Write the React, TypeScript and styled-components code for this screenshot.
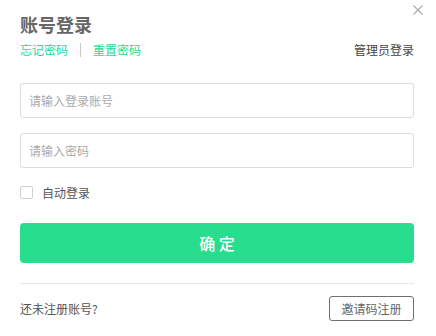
import React from 'react'
import styled, { createGlobalStyle } from 'styled-components'

const GlobalStyle = createGlobalStyle`
  html, body {
    margin: 0;
    padding: 0;
    background: #fff;
  }
  body {
    font-family: 'Noto Sans CJK SC', 'Noto Sans', sans-serif;
  }
  * {
    box-sizing: border-box;
  }
`

const Dialog = styled.div`
  position: relative;
  width: 436px;
  height: 336px;
  padding: 14px 22px 0 20px;
  display: flex;
  flex-direction: column;
`

const Close = styled.button`
  position: absolute;
  top: 3px;
  right: 13px;
  width: 10px;
  height: 10px;
  padding: 0;
  border: none;
  background: none;
  cursor: pointer;
`

const Title = styled.h2`
  margin: 0;
  font-size: 18px;
  line-height: 20px;
  font-weight: 700;
  color: #666;
`

const LinkRow = styled.div`
  display: flex;
  align-items: center;
  margin-top: 9px;
  height: 14px;
  font-size: 12px;
  line-height: 14px;
`

const GreenLink = styled.a`
  color: #2bd793;
  text-decoration: none;
  cursor: pointer;
`

const Sep = styled.span`
  width: 1px;
  height: 14px;
  background: #c8c8c8;
  margin: 0 12px;
`

const AdminLink = styled.a`
  margin-left: auto;
  color: #444;
  cursor: pointer;
`

const Input = styled.input<{ $top: number }>`
  display: block;
  width: 100%;
  height: 35px;
  margin-top: ${p => p.$top}px;
  padding: 0 8px;
  border: 1px solid #dcdcdc;
  border-radius: 3px;
  font-family: inherit;
  font-size: 12px;
  color: #333;
  outline: none;
  &::placeholder {
    color: #aaa;
  }
`

const CheckRow = styled.label`
  display: flex;
  align-items: center;
  margin-top: 18px;
  height: 13px;
  font-size: 12px;
  color: #555;
  cursor: pointer;
`

const Box = styled.span`
  width: 13px;
  height: 13px;
  border: 1px solid #d0d0d0;
  border-radius: 2px;
  margin-right: 9px;
`

const Submit = styled.button`
  margin-top: 24px;
  width: 100%;
  height: 40px;
  border: none;
  border-radius: 4px;
  background: #28dd8e;
  color: #fff;
  font-family: inherit;
  font-size: 16px;
  font-weight: 500;
  cursor: pointer;
`

const Divider = styled.div`
  margin-top: 20px;
  height: 1px;
  background: #e8e8e8;
`

const Footer = styled.div`
  display: flex;
  align-items: center;
  justify-content: space-between;
  margin-top: 12px;
  font-size: 12px;
  color: #555;
`

const OutlineButton = styled.button`
  width: 85px;
  height: 25px;
  padding: 0;
  border: 1px solid #707070;
  border-radius: 3px;
  background: #fff;
  color: #666;
  font-family: inherit;
  font-size: 12px;
  cursor: pointer;
`

export default function App() {
  return (
    <>
      <GlobalStyle />
      <Dialog>
        <Close aria-label="关闭">
          <svg width="10" height="10" viewBox="0 0 10 10">
            <path d="M0.5 0.5 L9.5 9.5 M9.5 0.5 L0.5 9.5" stroke="#aaa" strokeWidth="1.1" />
          </svg>
        </Close>
        <Title>账号登录</Title>
        <LinkRow>
          <GreenLink>忘记密码</GreenLink>
          <Sep />
          <GreenLink>重置密码</GreenLink>
          <AdminLink>管理员登录</AdminLink>
        </LinkRow>
        <Input $top={26} placeholder="请输入登录账号" />
        <Input $top={15} type="password" placeholder="请输入密码" />
        <CheckRow>
          <Box />
          自动登录
        </CheckRow>
        <Submit>确 定</Submit>
        <Divider />
        <Footer>
          <span>还未注册账号?</span>
          <OutlineButton>邀请码注册</OutlineButton>
        </Footer>
      </Dialog>
    </>
  )
}
